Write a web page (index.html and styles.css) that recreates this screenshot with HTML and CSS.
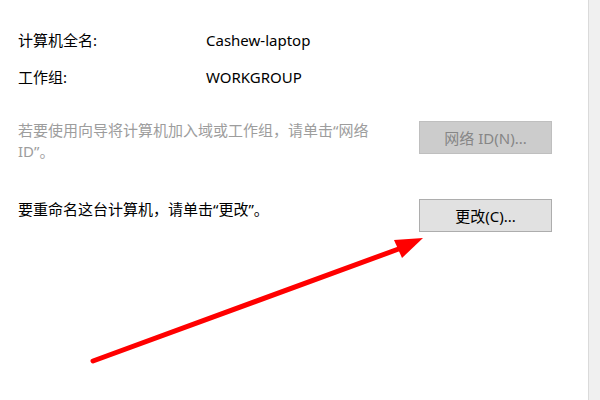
FILE: index.html
```html
<!DOCTYPE html>
<html lang="zh-CN">
<head>
<meta charset="utf-8">
<title>计算机名</title>
<link rel="stylesheet" href="styles.css">
</head>
<body>
<div class="window">
  <main class="panel">
    <div class="info-row">
      <span class="label">计算机全名:</span>
      <span class="value">Cashew-laptop</span>
    </div>
    <div class="info-row">
      <span class="label">工作组:</span>
      <span class="value">WORKGROUP</span>
    </div>
    <div class="action action-netid">
      <p class="desc desc-disabled">若要使用向导将计算机加入域或工作组，请单击“网络 ID”。</p>
      <button class="btn btn-disabled" disabled>网络 ID(N)...</button>
    </div>
    <div class="action action-rename">
      <p class="desc">要重命名这台计算机，请单击“更改”。</p>
      <button class="btn">更改(C)...</button>
    </div>
  </main>
  <div class="scroll-strip"></div>
</div>
<svg class="annotation" width="600" height="400" viewBox="0 0 600 400">
  <line x1="93" y1="361" x2="404" y2="247" stroke="#ff0000" stroke-width="5" stroke-linecap="round"/>
  <polygon points="394,240 423,238 402,258" fill="#ff0000"/>
</svg>
</body>
</html>
```
FILE: styles.css
```css
html, body {
  margin: 0;
  padding: 0;
  background: #ffffff;
}
body {
  width: 600px;
  height: 400px;
  overflow: hidden;
  position: relative;
  font-family: "Noto Sans", "Noto Sans CJK SC", sans-serif;
  font-size: 15px;
  line-height: 21px;
  color: #000000;
}
.window {
  display: flex;
  height: 400px;
}
.panel {
  width: 588px;
  box-sizing: border-box;
  padding: 30px 36px 0 18px;
  background: #ffffff;
}
.scroll-strip {
  flex: 1;
  background: #f0f0f0;
  border-left: 1px solid #dadada;
}
.info-row {
  display: grid;
  grid-template-columns: 188px 1fr;
  margin-bottom: 16px;
}
.info-row + .info-row {
  margin-bottom: 0;
}
.action {
  display: grid;
  grid-template-columns: 1fr 133px;
  column-gap: 28px;
  align-items: start;
}
.action-netid {
  margin-top: 32px;
}
.action-rename {
  margin-top: 37px;
}
.desc {
  margin: 0;
  max-width: 372px;
}
.desc-disabled {
  color: #9d9d9d;
}
.btn {
  width: 133px;
  height: 33px;
  box-sizing: border-box;
  margin: 0;
  padding: 0;
  font-family: inherit;
  font-size: 15px;
  color: #000000;
  background: #e1e1e1;
  border: 1px solid #adadad;
  border-radius: 0;
}
.action-netid .btn {
  margin-top: 1px;
}
.btn-disabled {
  background: #cccccc;
  border-color: #bfbfbf;
  color: #868686;
}
.annotation {
  position: absolute;
  left: 0;
  top: 0;
  pointer-events: none;
}
```
